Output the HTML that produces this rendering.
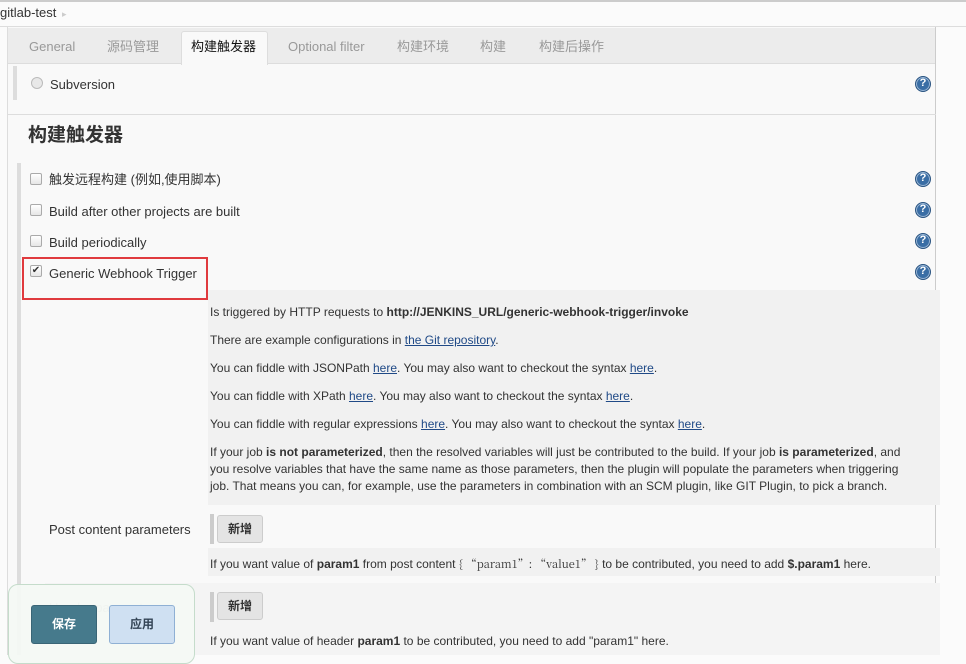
<!DOCTYPE html>
<html><head><meta charset="utf-8"><style>
*{margin:0;padding:0;box-sizing:border-box}
body{width:966px;height:655px;overflow:hidden;background:#fbfbfb;font-family:"Liberation Sans","Noto Sans CJK SC",sans-serif;font-size:13px;color:#333;position:relative}
.a{position:absolute;white-space:nowrap;line-height:16px}
.help{position:absolute;left:915px;width:16px;height:16px;border-radius:50%;background:#3a6ea5;border:1.5px solid #2b5582;box-shadow:0 0 0 1px #9bb7d6 inset;color:#fff;font:bold 11px "Liberation Sans",sans-serif;text-align:center;line-height:13px}
.cb{position:absolute;left:30px;width:12px;height:12px;border:1px solid #aaa;border-radius:2px;background:linear-gradient(#fff,#e6e6e6)}
.ht{position:absolute;left:210px;font-size:12px;color:#333;line-height:17px;white-space:nowrap}
.ht a{color:#204a87;text-decoration:underline}
.btn{position:absolute;left:217px;width:46px;height:28px;background:#e4e4e4;border:1px solid #ccc;border-radius:3px;font-size:12px;font-weight:bold;text-align:center;line-height:26px;color:#333}
.bar{position:absolute;left:210px;width:4px;height:30px;background:#ccc}
.tab{top:38px;color:#999;line-height:18px;height:18px}
</style></head><body>
<div class="a" style="left:0;top:0;width:966px;height:2px;background:#ccc"></div>
<div class="a" style="left:0;top:5px;font-size:13px;color:#333">gitlab-test</div>
<div class="a" style="left:62px;top:6px;color:#ccc;font-size:9px">▸</div>
<div class="a" style="left:0;top:26px;width:966px;height:1px;background:#ddd"></div>
<div class="a" style="left:7px;top:27px;width:929px;height:628px;background:#f9f9f9;border-left:1px solid #ddd;border-right:1px solid #ccc"></div>
<div class="a" style="left:8px;top:28px;width:927px;height:36px;background:#ececec;border-bottom:1px solid #ddd"></div>
<div class="a" style="left:181px;top:31px;width:87px;height:34px;background:#f9f9f9;border:1px solid #ddd;border-bottom:none;border-radius:3px 3px 0 0"></div>
<div class="a tab" style="left:29px">General</div>
<div class="a tab" style="left:107px">源码管理</div>
<div class="a tab" style="left:191px;color:#111">构建触发器</div>
<div class="a tab" style="left:288px">Optional filter</div>
<div class="a tab" style="left:397px">构建环境</div>
<div class="a tab" style="left:480px">构建</div>
<div class="a tab" style="left:539px">构建后操作</div>
<div class="a" style="left:13px;top:66px;width:4px;height:34px;background:#ddd"></div>
<div class="a" style="left:31px;top:77px;width:12px;height:12px;border-radius:50%;border:1px solid #bbb;background:#e8e8e8"></div>
<div class="a" style="left:50px;top:77px">Subversion</div>
<div class="help" style="top:76px">?</div>
<div class="a" style="left:8px;top:114px;width:928px;height:1px;background:#ddd"></div>
<div class="a" style="left:28px;top:124px;font-size:19px;line-height:24px;font-weight:bold;color:#333">构建触发器</div>
<div class="a" style="left:17px;top:163px;width:4px;height:492px;background:#ddd"></div>
<div class="cb" style="top:173px"></div><div class="a" style="left:49px;top:172px;line-height:16px;height:16px">触发远程构建 (例如,使用脚本)</div><div class="help" style="top:171px">?</div>
<div class="cb" style="top:204px"></div><div class="a" style="left:49px;top:204px">Build after other projects are built</div><div class="help" style="top:202px">?</div>
<div class="cb" style="top:235px"></div><div class="a" style="left:49px;top:235px">Build periodically</div><div class="help" style="top:233px">?</div>
<div class="cb" style="top:265px;font-size:10px;line-height:10px;text-align:center;color:#333">✔</div><div class="a" style="left:49px;top:266px">Generic Webhook Trigger</div><div class="help" style="top:264px">?</div>
<div class="a" style="left:22px;top:257px;width:186px;height:43px;border:2px solid #e03a3e"></div>
<div class="a" style="left:208px;top:290px;width:732px;height:215px;background:#f1f1f1"></div>
<div class="ht" style="top:304px">Is triggered by HTTP requests to <b>http://JENKINS_URL/generic-webhook-trigger/invoke</b></div>
<div class="ht" style="top:332px">There are example configurations in <a>the Git repository</a>.</div>
<div class="ht" style="top:360px">You can fiddle with JSONPath <a>here</a>. You may also want to checkout the syntax <a>here</a>.</div>
<div class="ht" style="top:388px">You can fiddle with XPath <a>here</a>. You may also want to checkout the syntax <a>here</a>.</div>
<div class="ht" style="top:416px">You can fiddle with regular expressions <a>here</a>. You may also want to checkout the syntax <a>here</a>.</div>
<div class="ht" style="top:444px;width:700px;white-space:normal">If your job <b>is not parameterized</b>, then the resolved variables will just be contributed to the build. If your job <b>is parameterized</b>, and you resolve variables that have the same name as those parameters, then the plugin will populate the parameters when triggering job. That means you can, for example, use the parameters in combination with an SCM plugin, like GIT Plugin, to pick a branch.</div>
<div class="a" style="left:49px;top:522px">Post content parameters</div>
<div class="bar" style="top:514px"></div><div class="btn" style="top:515px">新增</div>
<div class="a" style="left:208px;top:548px;width:732px;height:28px;background:#f1f1f1"></div>
<div class="ht" style="top:556px">If you want value of <b>param1</b> from post content <span style="font-family:'Noto Serif CJK SC',serif;font-size:11px">{ “param1”: “value1” }</span> to be contributed, you need to add <b>$.param1</b> here.</div>
<div class="a" style="left:45px;top:583px;width:895px;height:72px;background:#f4f4f4"></div>
<div class="a" style="left:49px;top:600px;color:#bbb">Header parameters</div>
<div class="bar" style="top:592px"></div><div class="btn" style="top:592px">新增</div>
<div class="ht" style="top:633px">If you want value of header <b>param1</b> to be contributed, you need to add "param1" here.</div>
<div class="a" style="left:8px;top:584px;width:187px;height:80px;background:rgba(244,248,244,0.92);border:1px solid #c5dccb;border-radius:10px"></div>
<div class="a" style="left:31px;top:605px;width:66px;height:39px;background:#467a8c;border:1px solid #3a6576;border-radius:3px;color:#fff;font-weight:bold;font-size:12px;text-align:center;line-height:37px">保存</div>
<div class="a" style="left:109px;top:605px;width:66px;height:39px;background:#cfe0f2;border:1px solid #8fb0d4;border-radius:3px;color:#345;font-weight:bold;font-size:12px;text-align:center;line-height:37px">应用</div>
</body></html>
